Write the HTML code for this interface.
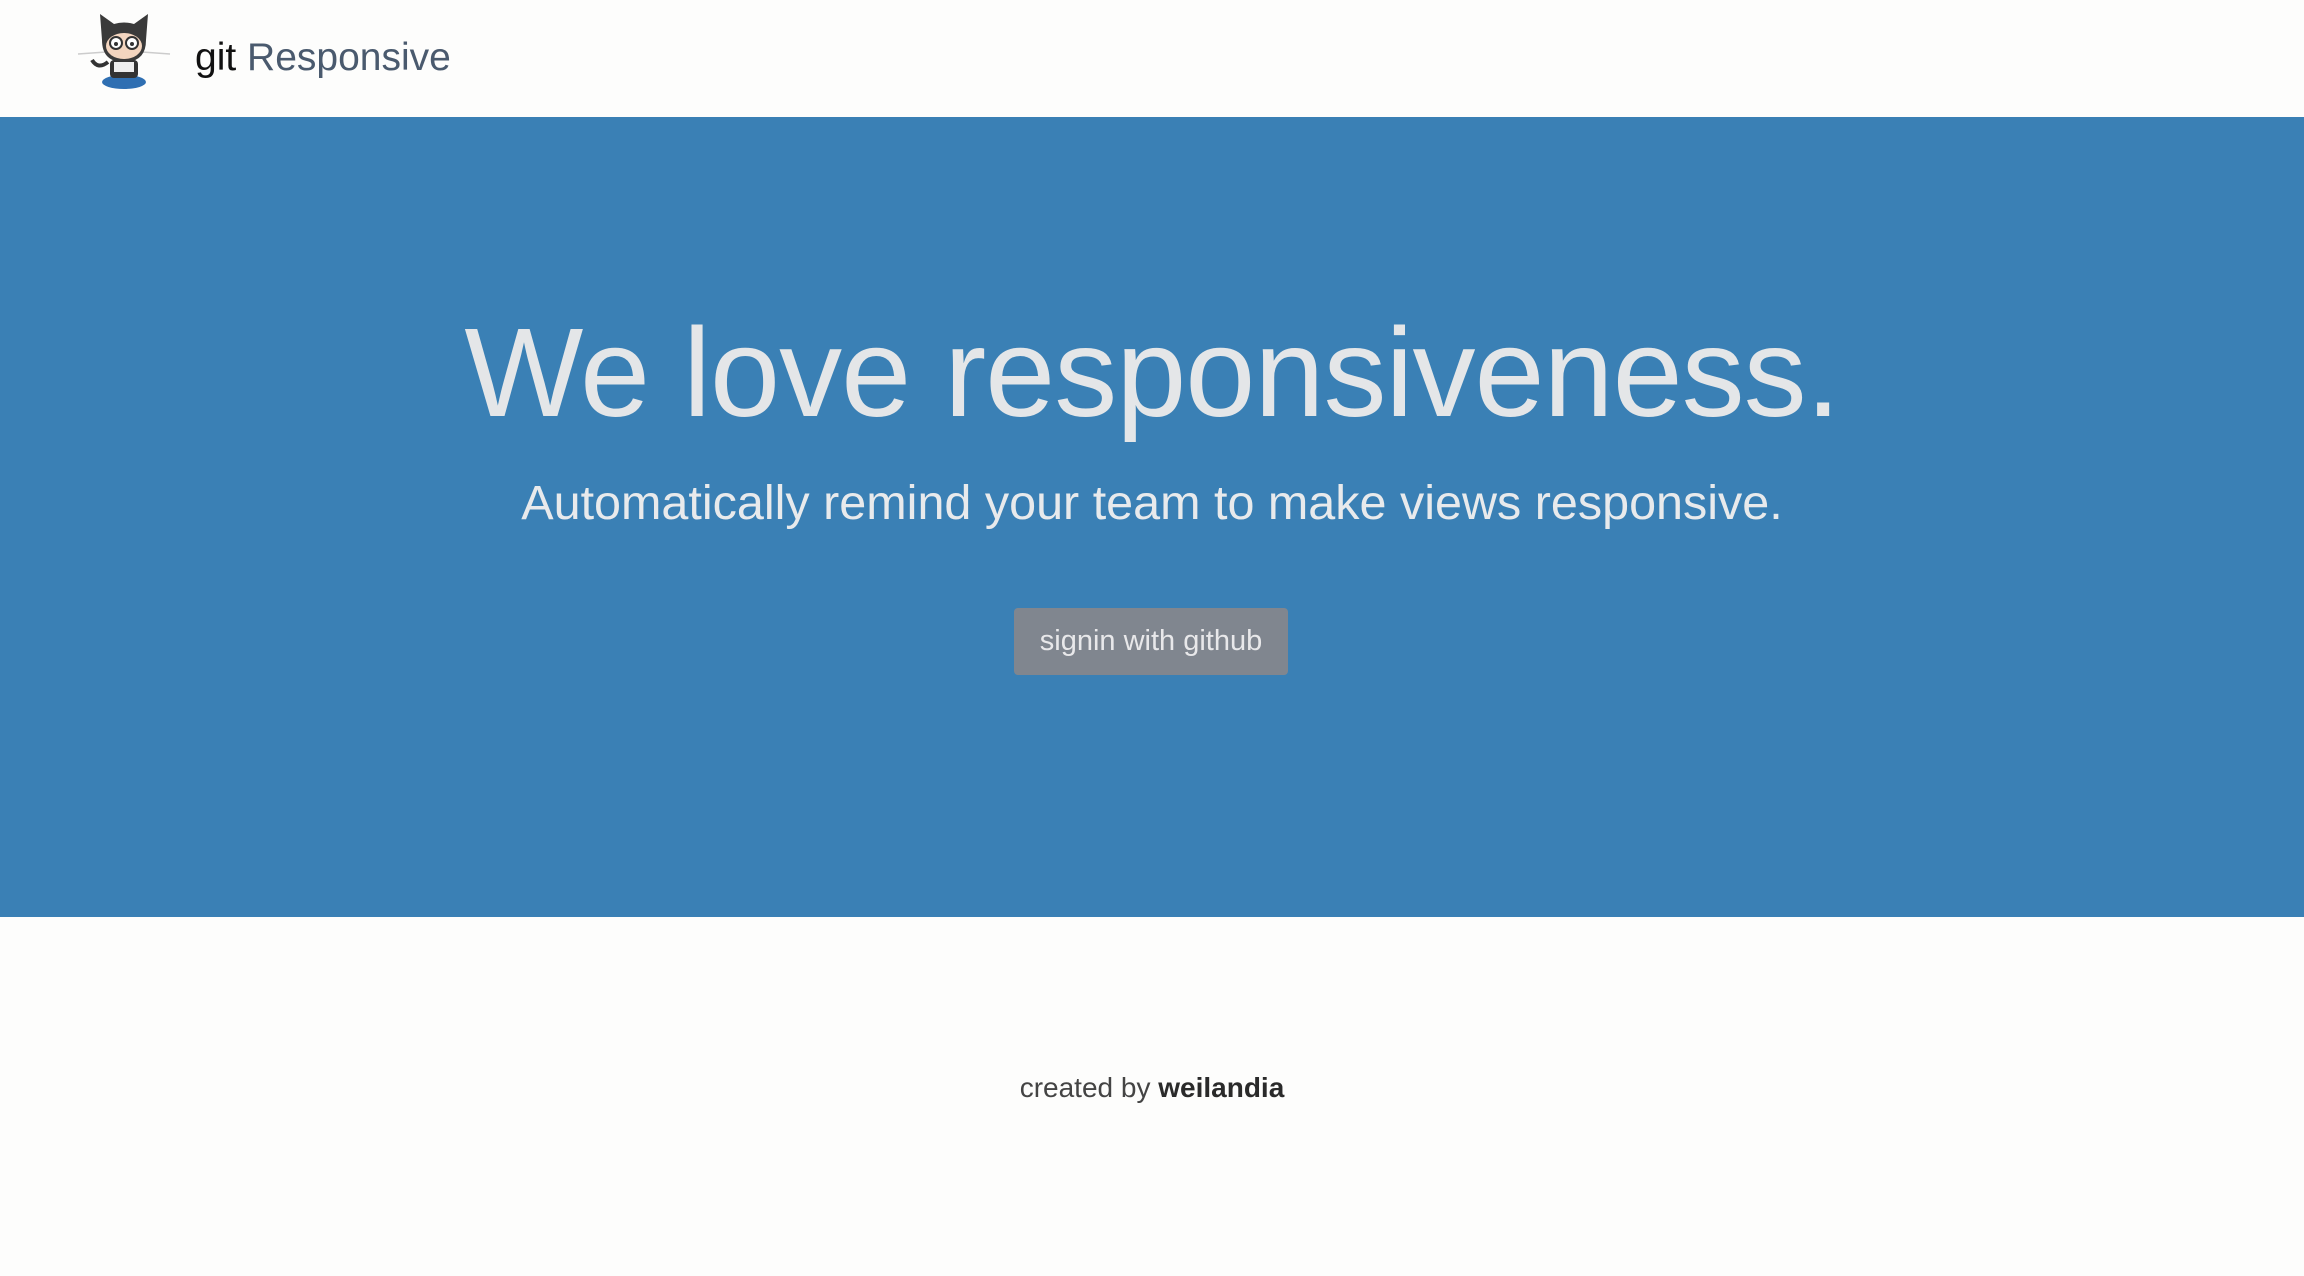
<!DOCTYPE html>
<html><head><meta charset="utf-8"><style>
html,body{margin:0;padding:0;width:2304px;height:1276px;overflow:hidden;background:#fdfdfc;font-family:"Liberation Sans",sans-serif;}
.abs{position:absolute;white-space:nowrap;}
#hero{position:absolute;left:0;top:117px;width:2304px;height:800px;background:#3a80b5;}
</style></head><body>
<svg class="abs" style="left:76px;top:10px" width="96" height="82" viewBox="0 0 96 82">
<line x1="2" y1="44" x2="30" y2="42" stroke="#ccc" stroke-width="1.5"/>
<line x1="66" y1="42" x2="94" y2="44" stroke="#ccc" stroke-width="1.5"/>
<ellipse cx="48" cy="72" rx="22" ry="7" fill="#2f6fb2"/>
<path d="M32 52 Q22 60 16 50" stroke="#333" stroke-width="4" fill="none"/>
<rect x="34" y="50" width="28" height="18" rx="4" fill="#333"/>
<rect x="38" y="52" width="20" height="10" fill="#eee"/>
<path d="M26 30 L24 4 L38 14 Q48 11 58 14 L72 4 L70 30 Q70 52 48 52 Q26 52 26 30Z" fill="#3a3a3a"/>
<ellipse cx="48" cy="36" rx="18" ry="13" fill="#f3d5bf"/>
<circle cx="40" cy="33" r="6" fill="#fff" stroke="#333" stroke-width="2"/>
<circle cx="56" cy="33" r="6" fill="#fff" stroke="#333" stroke-width="2"/>
<circle cx="40" cy="34" r="2" fill="#333"/><circle cx="56" cy="34" r="2" fill="#333"/>
</svg>
<div class="abs" style="left:195px;top:28px;font-size:39px;line-height:60px;"><span style="color:#111">git</span> <span style="color:#4a5a6e">Responsive</span></div>
<div id="hero">
<div class="abs" style="left:0;width:2304px;text-align:center;top:176px;font-size:126px;line-height:160px;color:#e4e6e8;letter-spacing:-1px;">We love responsiveness.</div>
<div class="abs" style="left:0;width:2304px;text-align:center;top:354px;font-size:48.5px;line-height:64px;color:#e8eaec;">Automatically remind your team to make views responsive.</div>
<div class="abs" style="left:1014px;top:491px;width:274px;height:67px;background:#80868f;border-radius:4px;color:#e8e8ea;font-size:29px;line-height:67px;text-align:center;">signin with github</div>
</div>
<div class="abs" style="left:0;width:2304px;text-align:center;top:1068px;font-size:28px;line-height:40px;color:#444;">created by <span style="color:#2a2a2a;font-weight:bold">weilandia</span></div>
</body></html>
